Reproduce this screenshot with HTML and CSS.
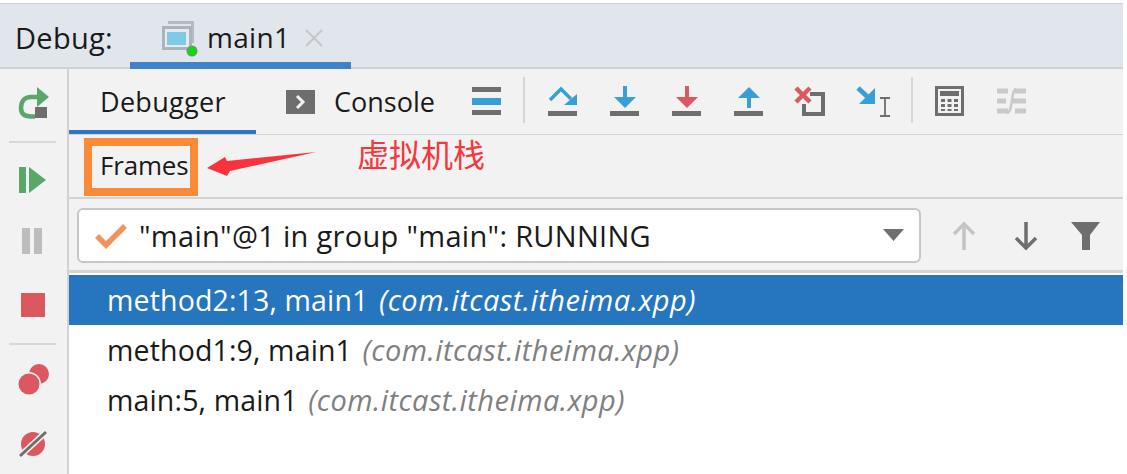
FILE: index.html
```
<!DOCTYPE html>
<html lang="en">
<head>
<meta charset="utf-8">
<title>Debug</title>
<link rel="stylesheet" href="styles.css">
</head>
<body>
<div class="window">
  <header class="tabbar">
    <span class="tabbar-label">Debug:</span>
    <div class="run-tab">
      <svg class="run-icon" width="37" height="39" viewBox="0 0 37 39"><path d="M7 3h26v3H7zM30 3h3v22h-3z" fill="#b3bcc4"/><path d="M1 8h30v24H1z" fill="#aab4bd"/><path d="M4 11h24v18H4z" fill="#e7eaee"/><path d="M6 14h19v13H6z" fill="#7fcbe6"/><circle cx="31" cy="33" r="5.500" fill="#7d8a7d"/><circle cx="31" cy="33" r="4.500" fill="#0fdc0f"/></svg>
      <span class="run-name">main1</span>
      <svg class="close-icon" width="20" height="20" viewBox="0 0 20 20"><path d="M2 2l16 16M18 2L2 18" stroke="#c3c7cc" stroke-width="2"/></svg>
    </div>
  </header>
  <div class="body">
    <aside class="sidebar">
      <svg class="side-icon rerun" width="34" height="36" viewBox="0 0 34 36"><path d="M22 12h-7C8 12 5 17 5 23s4 8.500 10 8.500h4" fill="none" stroke="#59a869" stroke-width="4.500"/><path d="M21 2l12 10-12 10z" fill="#59a869"/><rect x="19" y="22" width="12" height="11" fill="#6e6e6e"/></svg>
      <div class="side-sep first"></div>
      <svg class="side-icon resume" width="30" height="26" viewBox="0 0 30 26"><rect x="1" y="0" width="7" height="26" fill="#59a869"/><path d="M11 0l17 13-17 13z" fill="#59a869"/></svg>
      <svg class="side-icon pause" width="22" height="26" viewBox="0 0 22 26"><rect x="1" y="0" width="8" height="26" fill="#bdbdbd"/><rect x="13" y="0" width="8" height="26" fill="#bdbdbd"/></svg>
      <svg class="side-icon stop" width="26" height="26" viewBox="0 0 26 26"><rect x="1" y="1" width="24" height="24" fill="#db5860"/></svg>
      <div class="side-sep second"></div>
      <svg class="side-icon bps" width="32" height="32" viewBox="0 0 32 32"><circle cx="21" cy="11" r="10" fill="#db5860"/><circle cx="11" cy="21" r="12" fill="#f2f2f2"/><circle cx="11" cy="21" r="10.500" fill="#db5860"/></svg>
      <svg class="side-icon mute" width="30" height="30" viewBox="0 0 30 30"><circle cx="15" cy="15" r="12" fill="#db5860"/><path d="M2 27L28 3" stroke="#f2f2f2" stroke-width="6"/><path d="M2 27L28 3" stroke="#6e6e6e" stroke-width="3"/></svg>
    </aside>
    <main class="main">
      <div class="toolbar">
        <div class="tab active">Debugger</div>
        <div class="tab console">
          <svg width="30" height="26" viewBox="0 0 30 26"><rect x="0" y="1" width="29" height="24" fill="#6e6e6e"/><path d="M11 7l6 6-6 6" fill="none" stroke="#f2f2f2" stroke-width="3"/></svg>
          <span>Console</span>
        </div>
        <svg class="tool layout" width="30" height="28" viewBox="0 0 30 28"><rect y="0" width="29" height="5" fill="#6e6e6e"/><rect y="11" width="29" height="7" fill="#389fd6"/><rect y="23" width="29" height="5" fill="#6e6e6e"/></svg>
        <div class="tool-sep"></div>
        <svg class="tool" width="30" height="30" viewBox="0 0 30 30"><path d="M2 14L13 3l10 10" fill="none" stroke="#389fd6" stroke-width="3.500"/><path d="M16 19h13V8z" fill="#389fd6"/><rect y="25" width="29" height="5" fill="#6e6e6e"/></svg>
        <svg class="tool gap" width="30" height="30" viewBox="0 0 30 30"><rect x="13" y="0" width="4" height="12" fill="#389fd6"/><path d="M4 11h22L15 22z" fill="#389fd6"/><rect y="25" width="29" height="5" fill="#6e6e6e"/></svg>
        <svg class="tool gap" width="30" height="30" viewBox="0 0 30 30"><rect x="13" y="0" width="4" height="12" fill="#db5860"/><path d="M4 11h22L15 22z" fill="#db5860"/><rect y="25" width="29" height="5" fill="#6e6e6e"/></svg>
        <svg class="tool gap" width="30" height="30" viewBox="0 0 30 30"><rect x="13" y="10" width="4" height="12" fill="#389fd6"/><path d="M4 12h22L15 1z" fill="#389fd6"/><rect y="25" width="29" height="5" fill="#6e6e6e"/></svg>
        <svg class="tool gap del" width="32" height="30" viewBox="0 0 32 30"><path d="M16 8h13v20H10V18" fill="none" stroke="#6e6e6e" stroke-width="4"/><path d="M2 2l14 14M16 2L2 16" stroke="#db5860" stroke-width="4.500"/></svg>
        <svg class="tool gap cursor" width="36" height="32" viewBox="0 0 36 32"><path d="M2 2l14 13" stroke="#389fd6" stroke-width="5"/><path d="M3 18h16V2z" fill="#389fd6"/><path d="M24 12h10M24 30h10M29 12v18" fill="none" stroke="#6e6e6e" stroke-width="1.800"/></svg>
        <div class="tool-sep right"></div>
        <svg class="tool" width="30" height="30" viewBox="0 0 30 30"><rect x="1.500" y="1.500" width="26" height="27" fill="none" stroke="#6e6e6e" stroke-width="3"/><rect x="5" y="5" width="19" height="5" fill="#6e6e6e"/><path d="M6 13h4v3H6zM12.500 13h4v3h-4zM19 13h4v3h-4zM6 18h4v3H6zM12.500 18h4v3h-4zM19 18h4v3h-4zM6 23h4v2H6zM12.500 23h4v2h-4zM19 23h4v2h-4z" fill="#6e6e6e"/></svg>
        <svg class="tool gap wide" width="30" height="26" viewBox="0 0 30 26"><path d="M0 3h11M0 13h9M0 23h11M18 3h11M15 13h14M18 23h11" stroke="#c9c9c9" stroke-width="5"/><path d="M19 1C14 1 16 25 10 25" fill="none" stroke="#c9c9c9" stroke-width="2.500"/></svg>
      </div>
      <div class="frames-head"><span class="frames-title">Frames</span></div>
      <div class="thread-row">
        <div class="thread-select">
          <svg class="check" width="32" height="26" viewBox="0 0 32 26"><path d="M2 13l9 9L30 3" fill="none" stroke="#f2935c" stroke-width="5.500"/></svg>
          <span class="thread-text">"main"@1 in group "main": RUNNING</span>
          <svg class="caret" width="22" height="13" viewBox="0 0 22 13"><path d="M0 0h21L10.500 12z" fill="#6e6e6e"/></svg>
        </div>
        <svg class="nav up" width="24" height="30" viewBox="0 0 24 30"><path d="M12 29V3M2 13L12 3l10 10" fill="none" stroke="#c4c4c4" stroke-width="3.500"/></svg>
        <svg class="nav down" width="24" height="30" viewBox="0 0 24 30"><path d="M12 1v26M2 17l10 10 10-10" fill="none" stroke="#6e6e6e" stroke-width="3.500"/></svg>
        <svg class="nav filter" width="30" height="30" viewBox="0 0 30 30"><path d="M0 1h29L19 14v15h-8V14z" fill="#6e6e6e"/></svg>
      </div>
      <ul class="frames">
        <li class="frame selected">method2:13, main1 <em>(com.itcast.itheima.xpp)</em></li>
        <li class="frame">method1:9, main1 <em>(com.itcast.itheima.xpp)</em></li>
        <li class="frame">main:5, main1 <em>(com.itcast.itheima.xpp)</em></li>
      </ul>
    </main>
  </div>
  <div class="note-box"></div>
  <svg class="note-arrow" width="112" height="28" viewBox="0 0 112 28"><path d="M1 17L19 6l2 4L110 1 24 20l-3 5z" fill="#f8333c"/></svg>
  <span class="note-text">虚拟机栈</span>
</div>
</body>
</html>
```
FILE: styles.css
```
* { box-sizing: border-box; }
html, body { margin: 0; padding: 0; background: #fff; }
body { width: 1127px; height: 474px; overflow: hidden; font-family: "Open Sans", "Noto Sans", "Liberation Sans", sans-serif; color: #1a1a1a; }
.window { position: relative; width: 1123px; height: 474px; padding-top: 3px; display: flex; flex-direction: column; background: #f2f2f2; }
.window::before { content: ""; position: absolute; left: 0; right: 0; top: 0; height: 3px; background: #fff; }

.tabbar { height: 66px; flex: none; display: flex; align-items: stretch; background: #e1e5ec; border-top: 1px solid #d0d0d0; border-bottom: 2px solid #cfd1d4; padding-left: 15px; }
.tabbar-label { font-size: 29px; line-height: 67px; width: 115px; letter-spacing: 0.3px; height: 64px; }
.run-tab { width: 221px; height: 65px; display: flex; align-items: flex-start; padding-left: 31px; border-bottom: 7px solid #4083c9; }
.run-icon { margin-top: 14px; flex: none; }
.run-name { font-size: 28px; line-height: 66px; margin-left: 9px; letter-spacing: 0.3px; }
.close-icon { margin: 24px 0 0 14px; }

.body { flex: 1; display: flex; min-height: 0; }
.sidebar { width: 69px; flex: none; border-right: 2px solid #d2d2d2; display: flex; flex-direction: column; align-items: center; padding-right: 2px; }
.side-icon { display: block; flex: none; }
.rerun { margin-top: 16px; }
.side-sep { width: 47px; height: 2px; background: #d8d8d8; flex: none; }
.side-sep.first { margin-top: 20px; }
.resume { margin-top: 24px; }
.pause { margin-top: 35px; margin-left: -2px; }
.stop { margin-top: 38px; }
.side-sep.second { margin-top: 25px; }
.bps { margin-top: 18px; margin-left: 2px; }
.mute { margin-top: 34px; margin-left: 1px; }

.main { flex: 1; min-width: 0; display: flex; flex-direction: column; }
.toolbar { height: 66px; flex: none; display: flex; align-items: center; border-bottom: 1px solid #d2d2d2; }
.tab { font-size: 27px; letter-spacing: 0.15px; height: 65px; line-height: 65px; }
.tab.active { width: 187px; padding-left: 31px; border-bottom: 4px solid #2f78c0; letter-spacing: 0.3px; }
.tab.console { display: flex; align-items: center; margin-left: 30px; gap: 18px; width: 185px; letter-spacing: 0; }
.tool { flex: none; display: block; margin-top: 1px; margin-bottom: 3px; }
.layout { margin-left: 1px; }
.tool-sep { width: 2px; height: 46px; background: #d6d6d6; margin: 0 23px 3px 21px; flex: none; }
.tool-sep.right { margin: 0 22px 3px 19px; }
.gap { margin-left: 32px; }
.del { margin-left: 30px; }
.cursor { margin-left: 30px; margin-top: 4px; }
.wide { margin-left: 32px; }

.frames-head { height: 64px; flex: none; padding-left: 31px; border-bottom: 2px solid #d2d2d2; }
.frames-title { font-size: 26px; line-height: 61px; letter-spacing: -0.2px; }

.thread-row { height: 74px; flex: none; display: flex; align-items: flex-start; border-bottom: 3px solid #d4d4d4; padding: 9px 0 0 8px; }
.thread-select { width: 844px; height: 55px; background: #fff; border: 2px solid #c6c6c6; border-radius: 6px; display: flex; align-items: center; padding-left: 16px; flex: none; }
.check { flex: none; }
.thread-text { font-size: 29px; margin-left: 12px; flex: 1; white-space: nowrap; letter-spacing: 0.3px; }
.caret { margin-right: 14px; flex: none; }
.nav { flex: none; display: block; margin-top: 13px; }
.up { margin-left: 31px; }
.down { margin-left: 38px; }
.filter { margin-left: 33px; }

.frames { list-style: none; margin: 0; padding: 2px 0 0; flex: 1; background: #fff; }
.frame { height: 50px; line-height: 50px; font-size: 28.500px; padding-left: 38px; white-space: nowrap; color: #1a1a1a; letter-spacing: 0.15px; }
.frame em { color: #808080; font-style: italic; margin-left: 3px; font-size: 29px; letter-spacing: 0.45px; }
.frame.selected { background: #2675bf; color: #fff; }
.frame.selected em { color: #fff; }

.note-box { position: absolute; left: 84px; top: 138px; width: 114px; height: 58px; border: 8px solid #f98b38; }
.note-arrow { position: absolute; left: 206px; top: 151px; }
.note-text { position: absolute; left: 357px; top: 132px; font-size: 32px; line-height: 42px; color: #f4383c; font-family: "Noto Sans CJK SC", sans-serif; }
```
